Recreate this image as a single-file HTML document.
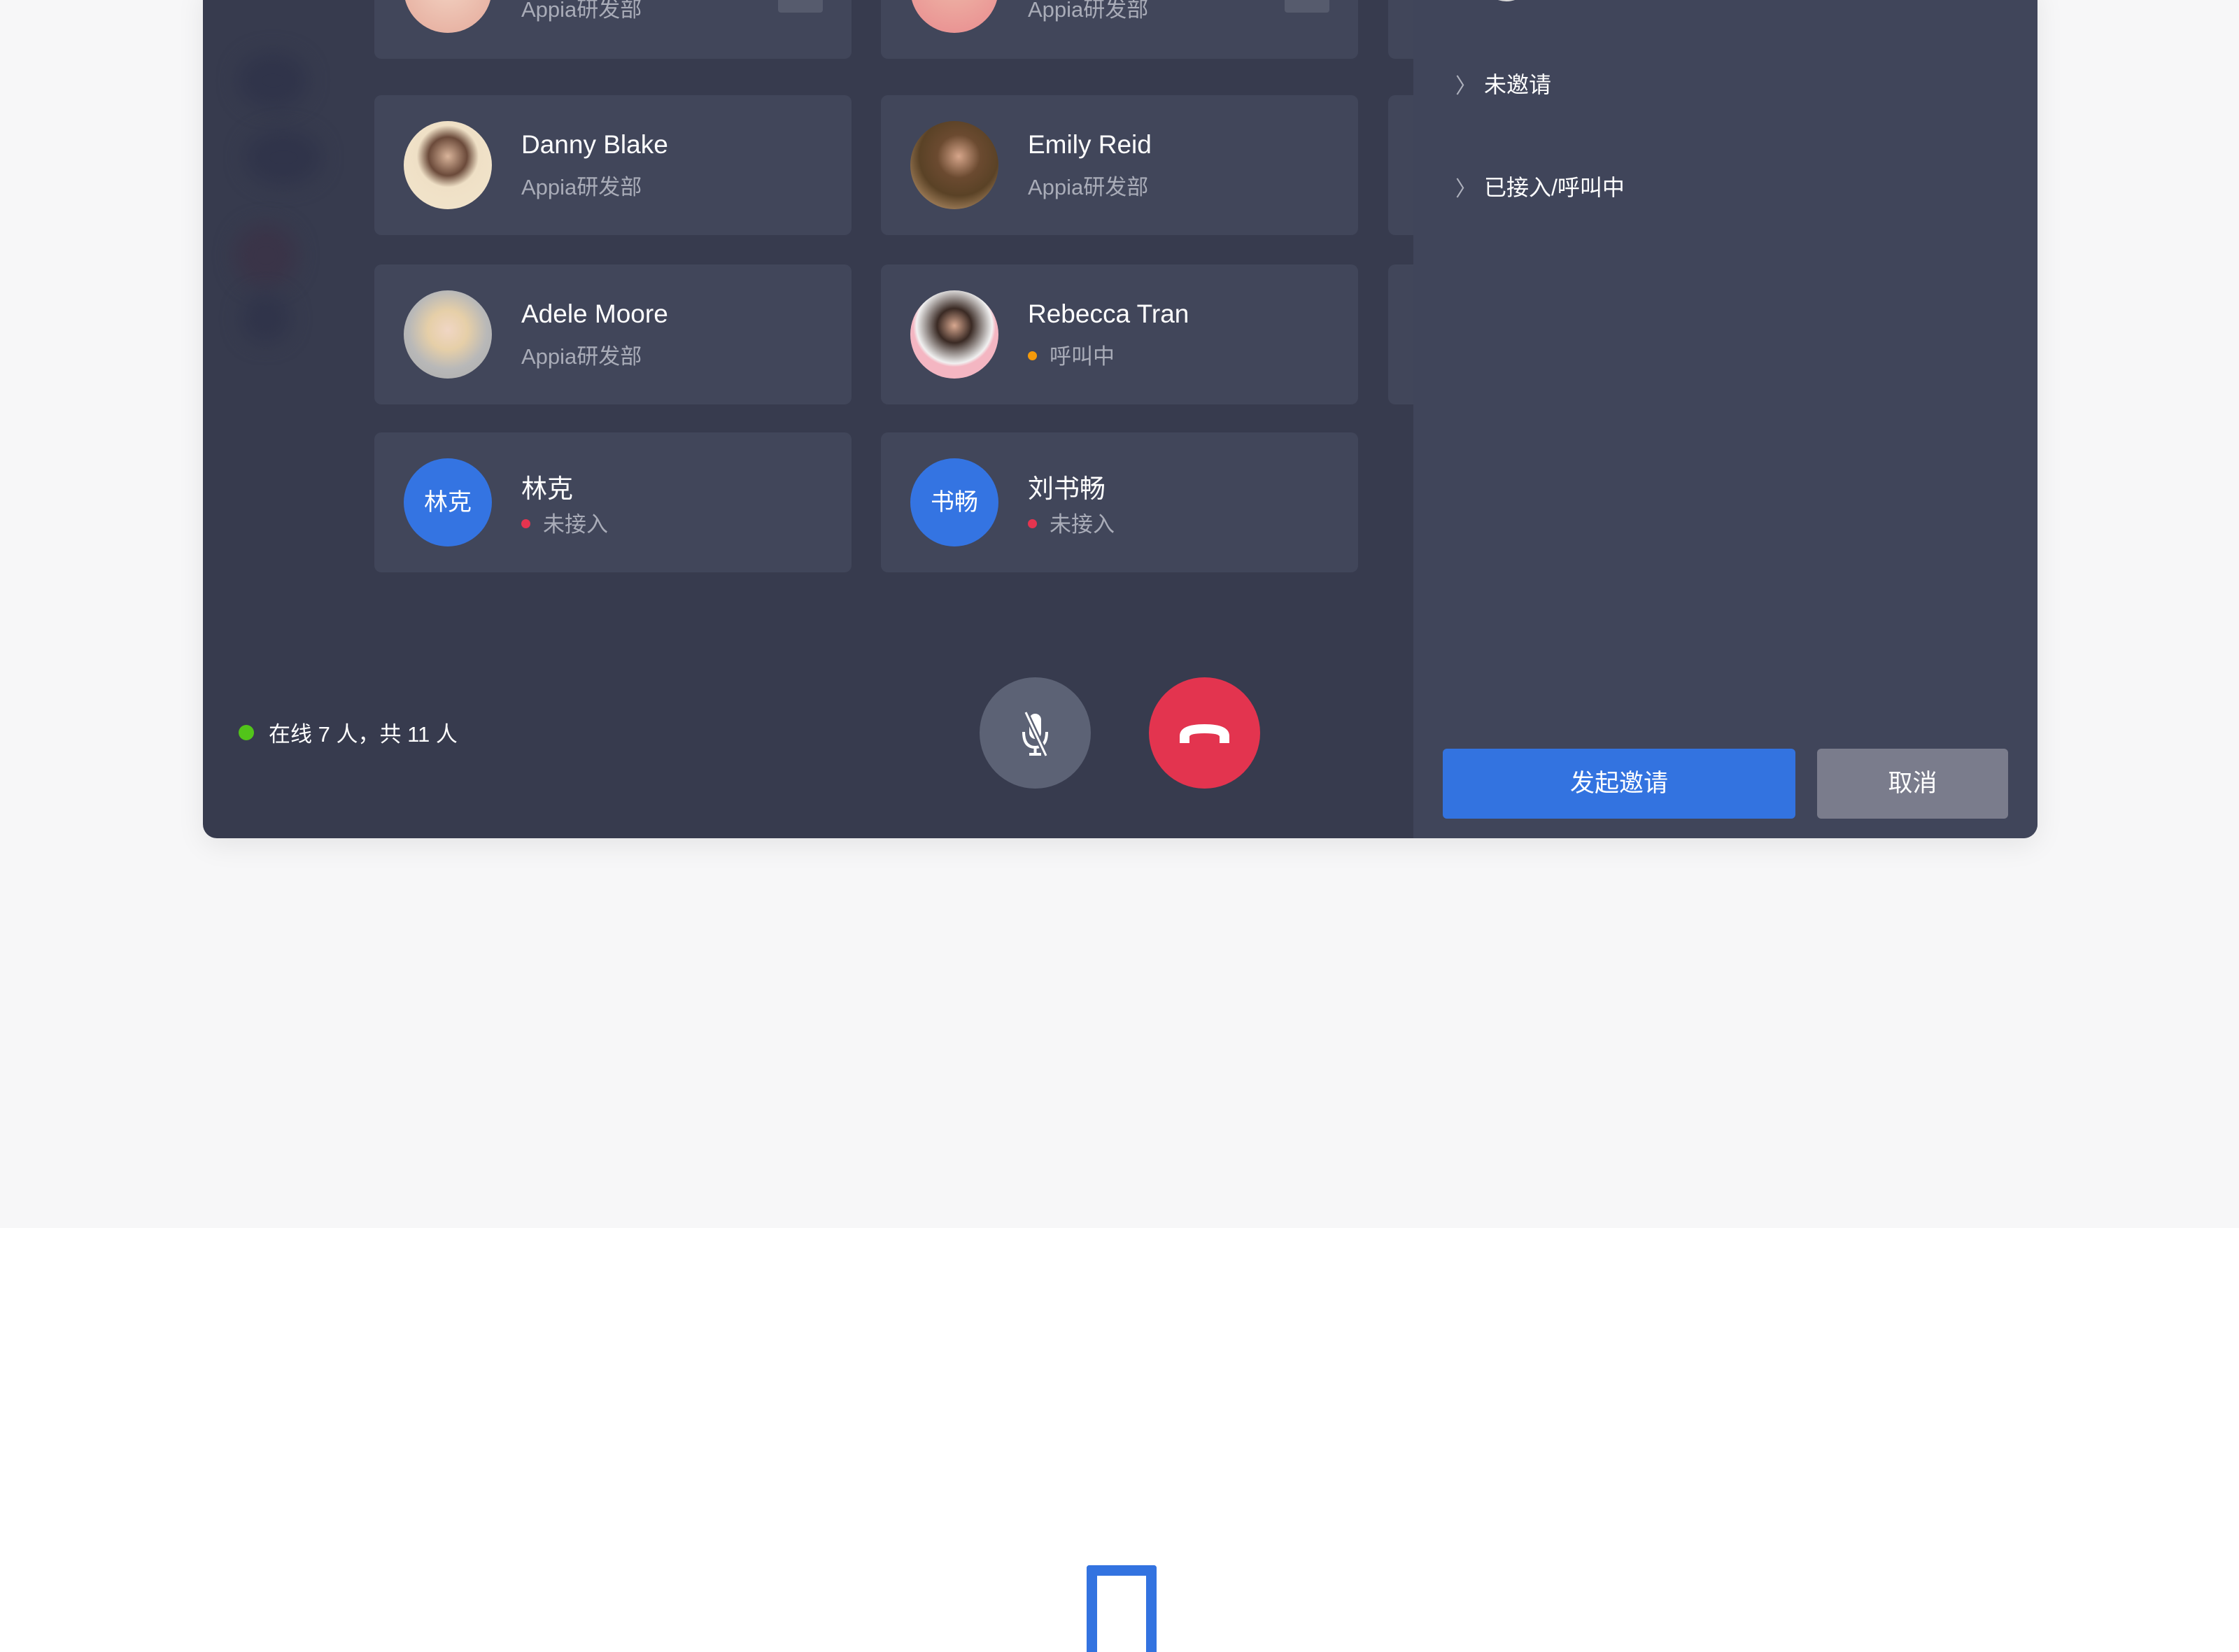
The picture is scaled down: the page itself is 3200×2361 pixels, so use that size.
<!DOCTYPE html>
<html><head><meta charset="utf-8"><style>
*{margin:0;padding:0;box-sizing:border-box}
html,body{width:3200px;height:2361px;overflow:hidden}
body{background:#fff;position:relative;font-family:"Liberation Sans","Noto Sans CJK SC",sans-serif}
.bg{position:absolute;left:0;top:0;width:3200px;height:1755px;background:#f7f7f8}
.panel{position:absolute;left:290px;top:-20px;width:2622px;height:1218px;background:#373b4e;border-radius:0 0 20px 20px;overflow:hidden;box-shadow:0 10px 40px rgba(0,0,0,.08)}
.right{position:absolute;left:1730px;top:0;width:892px;height:1218px;background:#40455a}
.card{position:absolute;width:682px;height:200px;background:#41465a;border-radius:10px}
.av{position:absolute;left:42px;top:37px;width:126px;height:126px;border-radius:50%}
.nm{position:absolute;left:210px;top:50px;font-size:37px;color:#fff;white-space:nowrap}
.sb{position:absolute;left:210px;top:106px;font-size:31px;color:#a9acb8;white-space:nowrap}
.dot{display:inline-block;width:13px;height:13px;border-radius:50%;margin-right:18px;vertical-align:middle;position:relative;top:-3px}
.blob{position:absolute;border-radius:50%;background:#30344a;filter:blur(14px)}
</style></head><body>
<div class="bg"></div>
<div class="panel">
 <div class="blob" style="left:50px;top:95px;width:100px;height:80px"></div>
 <div class="blob" style="left:60px;top:205px;width:110px;height:80px"></div>
 <div class="blob" style="left:45px;top:340px;width:90px;height:90px;background:#3a3448"></div>
 <div class="blob" style="left:55px;top:440px;width:70px;height:70px"></div>
 <div class="card" style="left:245px;top:-96px"><div class="av" style="top:37px;background:radial-gradient(circle at 50% 45%,#f3d2c2,#e4a99a)"></div><div class="sb" style="top:104px">Appia研发部</div><div style="position:absolute;left:577px;top:102px;width:64px;height:32px;background:#565b6d;border-radius:4px"></div></div>
 <div class="card" style="left:969px;top:-96px"><div class="av" style="background:radial-gradient(circle at 50% 35%,#eebba9,#e98a8e)"></div><div class="sb" style="top:104px">Appia研发部</div><div style="position:absolute;left:577px;top:102px;width:64px;height:32px;background:#565b6d;border-radius:4px"></div></div>
 <div class="card" style="left:1694px;top:-96px;width:100px"></div>
 <div class="card" style="left:245px;top:156px"><div class="av" style="background:radial-gradient(circle at 50% 40%,#d9b49a 0,#6b4a3a 28%,#efe0c6 45%,#f2e5cc)"></div><div class="nm">Danny Blake</div><div class="sb">Appia研发部</div></div>
 <div class="card" style="left:969px;top:156px"><div class="av" style="background:radial-gradient(circle at 55% 40%,#d6a58a 0,#6b4a30 30%,#5a4226 55%,#e3b88c)"></div><div class="nm">Emily Reid</div><div class="sb">Appia研发部</div></div>
 <div class="card" style="left:1694px;top:156px;width:100px"></div>
 <div class="card" style="left:245px;top:398px"><div class="av" style="background:radial-gradient(circle at 50% 45%,#f0d6c4 0,#e6cfa8 30%,#b8b8b8 60%,#a9a9a9)"></div><div class="nm">Adele Moore</div><div class="sb">Appia研发部</div></div>
 <div class="card" style="left:969px;top:398px"><div class="av" style="background:radial-gradient(circle at 50% 40%,#d8a890 0,#3a2a24 25%,#f1f1f1 55%,#f4b6c2 60%)"></div><div class="nm">Rebecca Tran</div><div class="sb"><span class="dot" style="background:#f59a0a"></span>呼叫中</div></div>
 <div class="card" style="left:1694px;top:398px;width:100px"></div>
 <div class="card" style="left:245px;top:638px"><div class="av" style="background:#3474e2;color:#fff;font-size:34px;text-align:center;line-height:126px">林克</div><div class="nm">林克</div><div class="sb"><span class="dot" style="background:#e5344f"></span>未接入</div></div>
 <div class="card" style="left:969px;top:638px"><div class="av" style="background:#3474e2;color:#fff;font-size:34px;text-align:center;line-height:126px">书畅</div><div class="nm">刘书畅</div><div class="sb"><span class="dot" style="background:#e5344f"></span>未接入</div></div>
 <div style="position:absolute;left:51px;top:1056px;width:22px;height:22px;border-radius:50%;background:#52c41a"></div>
 <div style="position:absolute;left:94px;top:1044px;font-size:31px;color:#fff;white-space:nowrap">在线 7 人，共 11 人</div>
 <div style="position:absolute;left:1110px;top:988px;width:159px;height:159px;border-radius:50%;background:#5c6275">
  <svg width="159" height="159" viewBox="0 0 159 159"><rect x="71" y="52" width="17" height="36" rx="8.5" fill="#fff"/><path d="M63 78 q0 22 16.5 22 q16.5 0 16.5-22" fill="none" stroke="#fff" stroke-width="4"/><path d="M79.5 100v10M71 110h17" stroke="#fff" stroke-width="4"/><path d="M66 50 L95 112" stroke="#5c6275" stroke-width="8"/><path d="M66 50 L95 112" stroke="#fff" stroke-width="3"/></svg>
 </div>
 <div style="position:absolute;left:1352px;top:988px;width:159px;height:159px;border-radius:50%;background:#e3344f">
  <svg width="159" height="159" viewBox="0 0 159 159"><path d="M44 94 v-10 q0-17 35.5-17 q35.5 0 35.5 17 v10 h-14 v-9 q0-5-21.5-5 q-21.5 0-21.5 5 v9z" fill="#fff"/></svg>
 </div>
 <div class="right">
  <div style="position:absolute;left:105px;top:-20px;width:56px;height:42px;border-radius:50%;background:#d8d8d8"></div>
  <div style="position:absolute;left:200px;top:-8px;font-size:30px;color:#a9acb8;white-space:nowrap;line-height:30px">· 设计三部（ ）</div>
  <div style="position:absolute;left:60px;top:118px;font-size:30px;color:#aeb1bd">〉</div>
  <div style="position:absolute;left:101px;top:116px;font-size:32px;color:#fff">未邀请</div>
  <div style="position:absolute;left:60px;top:265px;font-size:30px;color:#aeb1bd">〉</div>
  <div style="position:absolute;left:101px;top:263px;font-size:32px;color:#fff">已接入/呼叫中</div>
  <div style="position:absolute;left:42px;top:1090px;width:504px;height:100px;border-radius:6px;background:#3373e0;color:#fff;font-size:35px;text-align:center;line-height:100px">发起邀请</div>
  <div style="position:absolute;left:577px;top:1090px;width:273px;height:100px;border-radius:6px;background:#7a7c8c;color:#fff;font-size:35px;text-align:center;line-height:100px">取消</div>
 </div>
</div>
<div style="position:absolute;left:1553px;top:2237px;width:100px;height:124px;border:15px solid #3373e0;border-bottom:none;border-radius:4px 4px 0 0"></div>
</body></html>
